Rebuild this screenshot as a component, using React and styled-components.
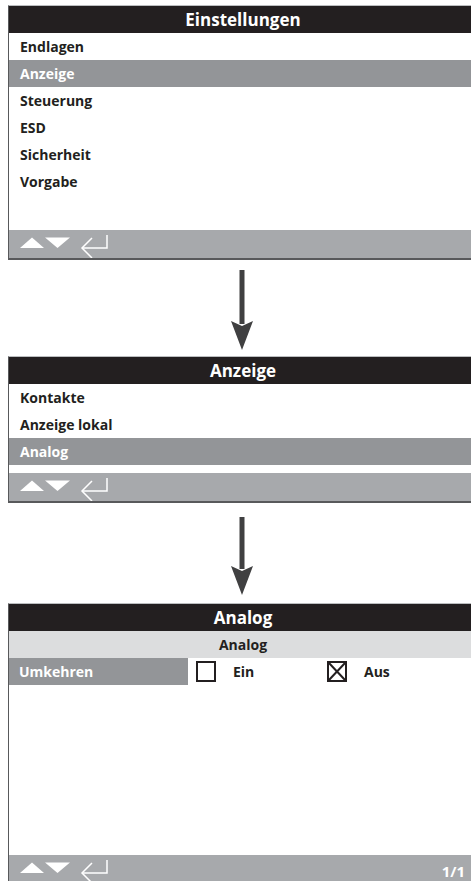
import React from "react";
import styled, { createGlobalStyle } from "styled-components";

const GlobalStyle = createGlobalStyle`
  html, body {
    margin: 0;
    padding: 0;
    background: #fff;
    overflow: hidden;
  }
  body {
    font-family: "Open Sans", "DejaVu Sans", sans-serif;
  }
`;

const Page = styled.div`
  width: 471px;
  height: 881px;
  padding: 5px 0 0 8px;
  box-sizing: border-box;
  display: flex;
  flex-direction: column;
`;

const Screen = styled.div`
  width: 468px;
  flex-shrink: 0;
  display: flex;
  flex-direction: column;
  border-top: 1px solid #bcbec0;
  border-left: 1px solid #58595b;
  border-bottom: ${(p) => (p.open ? "none" : "2px solid #58595b")};
`;

const Title = styled.div`
  height: 27px;
  background: #231f20;
  color: #fff;
  font-size: 17px;
  font-weight: 700;
  line-height: 27px;
  text-align: center;
`;

const SubTitle = styled.div`
  height: 27px;
  background: #dcddde;
  color: #231f20;
  font-size: 14px;
  font-weight: 700;
  line-height: 27px;
  text-align: center;
`;

const Item = styled.div`
  height: 27px;
  line-height: 27px;
  padding-left: 11px;
  font-size: 14px;
  font-weight: 700;
  color: ${(p) => (p.active ? "#fff" : "#231f20")};
  background: ${(p) => (p.active ? "#939598" : "#fff")};
`;

const Spacer = styled.div`
  height: ${(p) => p.h}px;
  background: #fff;
`;

const Footer = styled.div`
  height: ${(p) => p.h || 28}px;
  background: #a7a9ac;
  display: flex;
  justify-content: space-between;
  align-items: flex-start;
  padding-right: 12px;
  overflow: hidden;
`;

const PageNo = styled.span`
  color: #fff;
  font-size: 15px;
  font-weight: 700;
  line-height: 16px;
  margin-top: 8px;
`;

const Row = styled.div`
  height: 27px;
  display: flex;
  align-items: center;
`;

const Label = styled.div`
  width: 179px;
  height: 27px;
  line-height: 27px;
  padding-left: 10px;
  box-sizing: border-box;
  background: #939598;
  color: #fff;
  font-size: 14px;
  font-weight: 700;
  margin-right: 8px;
`;

const Option = styled.div`
  width: 131px;
  display: flex;
  align-items: center;
  gap: 17px;
  font-size: 14px;
  font-weight: 700;
  color: #231f20;
`;

const ArrowBox = styled.div`
  display: flex;
  justify-content: center;
  width: 468px;
  margin-top: ${(p) => p.top}px;
  margin-bottom: ${(p) => p.bottom}px;
  svg {
    display: block;
  }
`;

const NavIcons = () => (
  <svg width="110" height="28" viewBox="0 0 110 28">
    <polygon points="11,18 23,7.5 35,18" fill="#fff" />
    <polygon points="36,7.5 61,7.5 48.5,18" fill="#fff" />
    <g stroke="#fff" strokeWidth="1.5" fill="none">
      <polyline points="98,5 98,18 73,18" />
      <polyline points="83,8 73,18 83,28" />
    </g>
  </svg>
);

const DownArrow = ({ h }) => (
  <svg width="22" height={h} viewBox={`0 0 22 ${h}`}>
    <rect x="8.5" y="0" width="5" height={h - 26} fill="#404041" />
    <polygon points={`0,${h - 29} 11,${h - 24} 22,${h - 29} 11,${h}`} fill="#404041" />
  </svg>
);

const Box = ({ checked }) => (
  <svg width="20" height="21" viewBox="0 0 20 21">
    <rect x="1" y="1" width="18" height="19" fill="none" stroke="#231f20" strokeWidth="2" />
    {checked && (
      <g stroke="#231f20" strokeWidth="2">
        <line x1="2" y1="2" x2="18" y2="19" />
        <line x1="18" y1="2" x2="2" y2="19" />
      </g>
    )}
  </svg>
);

const menuMain = ["Endlagen", "Anzeige", "Steuerung", "ESD", "Sicherheit", "Vorgabe"];
const menuDisplay = ["Kontakte", "Anzeige lokal", "Analog"];

export default function App() {
  return (
    <>
      <GlobalStyle />
      <Page>
        <Screen>
          <Title>Einstellungen</Title>
          {menuMain.map((m) => (
            <Item key={m} active={m === "Anzeige"}>
              {m}
            </Item>
          ))}
          <Spacer h={35} />
          <Footer>
            <NavIcons />
          </Footer>
        </Screen>

        <ArrowBox top={10} bottom={6}>
          <DownArrow h={80} />
        </ArrowBox>

        <Screen>
          <Title>Anzeige</Title>
          {menuDisplay.map((m) => (
            <Item key={m} active={m === "Analog"}>
              {m}
            </Item>
          ))}
          <Spacer h={8} />
          <Footer>
            <NavIcons />
          </Footer>
        </Screen>

        <ArrowBox top={14} bottom={8}>
          <DownArrow h={78} />
        </ArrowBox>

        <Screen open>
          <Title>Analog</Title>
          <SubTitle>Analog</SubTitle>
          <Row>
            <Label>Umkehren</Label>
            <Option>
              <Box />
              Ein
            </Option>
            <Option>
              <Box checked />
              Aus
            </Option>
          </Row>
          <Spacer h={170} />
          <Footer h={26}>
            <NavIcons />
            <PageNo>1/1</PageNo>
          </Footer>
        </Screen>
      </Page>
    </>
  );
}
